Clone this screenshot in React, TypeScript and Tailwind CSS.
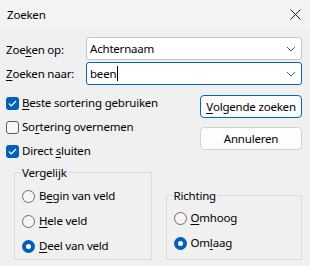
import React from 'react';

const font = { fontFamily: '"Noto Sans", "Liberation Sans", sans-serif' };

function M({ c }: { c: string }) {
  return <span className="underline underline-offset-[2px] decoration-[1px]">{c}</span>;
}

function Chevron() {
  return (
    <svg width="10" height="6" viewBox="0 0 10 6" className="mr-[5px]">
      <path d="M1 1 L5 5 L9 1" fill="none" stroke="#606060" strokeWidth="1" />
    </svg>
  );
}

function Combo({ focused, children }: { focused?: boolean; children: React.ReactNode }) {
  return (
    <div
      className={
        'flex-1 h-[23px] flex items-center justify-between bg-white rounded-[3px] border pl-[3px] ' +
        (focused ? 'border-[#0067c0]' : 'border-[#c4c4c4]')
      }
    >
      <div className="flex items-center">{children}</div>
      <Chevron />
    </div>
  );
}

function Check({ checked, children }: { checked?: boolean; children: React.ReactNode }) {
  return (
    <div className="h-[24px] flex items-center gap-[3px]">
      {checked ? (
        <div className="w-[13px] h-[13px] rounded-[3px] bg-[#005fb8] flex items-center justify-center">
          <svg width="9" height="7" viewBox="0 0 9 7">
            <path d="M1 3.5 L3.3 5.8 L8 1" fill="none" stroke="white" strokeWidth="1.2" />
          </svg>
        </div>
      ) : (
        <div className="w-[13px] h-[13px] rounded-[3px] border border-[#5c5c5c] bg-[#f7f7f7]" />
      )}
      <span>{children}</span>
    </div>
  );
}

function Radio({ checked, children }: { checked?: boolean; children: React.ReactNode }) {
  return (
    <div className="h-[25px] flex items-center gap-[4px]">
      {checked ? (
        <div className="w-[13px] h-[13px] rounded-full bg-[#005fb8] flex items-center justify-center">
          <div className="w-[5px] h-[5px] rounded-full bg-white" />
        </div>
      ) : (
        <div className="w-[13px] h-[13px] rounded-full border border-[#6b6b6b] bg-[#f5f5f5]" />
      )}
      <span>{children}</span>
    </div>
  );
}

function Button({ primary, children }: { primary?: boolean; children: React.ReactNode }) {
  return (
    <div
      className={
        'w-[102px] h-[23px] flex items-center justify-center rounded-[4px] border bg-[#fdfdfd] ' +
        (primary ? 'border-[#0067c0]' : 'border-[#d3d3d3]')
      }
    >
      {children}
    </div>
  );
}

export default function App() {
  return (
    <div
      className="w-[310px] h-[266px] bg-[#f0f0f0] text-[11.5px] tracking-[-0.2px] leading-none text-black overflow-hidden"
      style={font}
    >
      {/* Title bar */}
      <div className="h-[29px] bg-[#f3f3f3] flex items-center justify-between pl-[7px] pr-[9px]">
        <span>Zoeken</span>
        <svg width="11" height="11" viewBox="0 0 11 11">
          <path d="M0.5 0.5 L10.5 10.5 M10.5 0.5 L0.5 10.5" stroke="#1a1a1a" strokeWidth="1" />
        </svg>
      </div>

      <div className="pl-[6px] pr-[8px] pt-[8px]">
        {/* Search rows */}
        <div className="flex items-center">
          <div className="w-[80px] pt-[2px]">
            Zoe<M c="k" />en op:
          </div>
          <Combo>Achternaam</Combo>
        </div>
        <div className="flex items-center mt-[2px]">
          <div className="w-[80px]">
            <M c="Z" />oeken naar:
          </div>
          <Combo focused>
            been
            <span className="inline-block w-[1px] h-[15px] bg-black ml-[1px]" />
          </Combo>
        </div>

        {/* Options and buttons */}
        <div className="flex justify-between mt-[6px]">
          <div className="flex flex-col">
            <Check checked>
              <M c="B" />este sortering gebruiken
            </Check>
            <Check>
              So<M c="r" />tering overnemen
            </Check>
            <Check checked>
              Direct <M c="s" />luiten
            </Check>
          </div>
          <div className="flex flex-col gap-[9px] pt-[4px]">
            <Button primary>
              <M c="V" />olgende zoeken
            </Button>
            <Button>Annuleren</Button>
          </div>
        </div>

        {/* Group boxes */}
        <div className="flex mt-[4px]">
          <fieldset className="ml-[8px] w-[138px] h-[93px] border border-[#dcdcdc] px-[7px] pb-0">
            <legend className="px-[1px] ml-[-1px]">Vergelijk</legend>
            <div className="flex flex-col pt-[5px]">
              <Radio>
                B<M c="e" />gin van veld
              </Radio>
              <Radio>
                <M c="H" />ele veld
              </Radio>
              <Radio checked>
                <M c="D" />eel van veld
              </Radio>
            </div>
          </fieldset>
          <fieldset className="ml-[14px] mt-[23px] w-[137px] h-[70px] border border-[#dcdcdc] px-[7px]">
            <legend className="px-[1px] ml-[-1px]">Richting</legend>
            <div className="flex flex-col pt-[4px]">
              <Radio>
                <M c="O" />mhoog
              </Radio>
              <Radio checked>
                Om<M c="l" />aag
              </Radio>
            </div>
          </fieldset>
        </div>
      </div>
    </div>
  );
}
